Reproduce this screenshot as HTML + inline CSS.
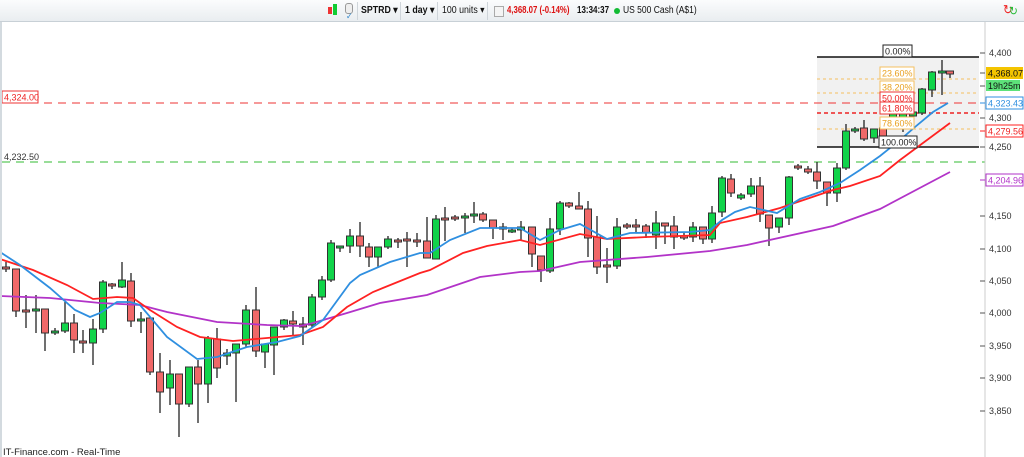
<!DOCTYPE html>
<html><head><meta charset="utf-8"><style>
body{margin:0;width:1024px;height:457px;overflow:hidden;background:#fff;font-family:"Liberation Sans",sans-serif;}
#tb{position:absolute;left:0;top:0;width:1024px;height:21px;background:linear-gradient(#fbfcfd,#e9edf0);border-bottom:1px solid #c8d0d6;font-size:10px;color:#111;}
#tb span{position:absolute;top:5px;white-space:nowrap;transform-origin:0 50%;transform:scaleX(0.88)}
.sep{position:absolute;top:2px;width:1px;height:18px;background:#cfd5da}
svg{position:absolute;left:0;top:0}
</style></head><body>
<svg width="1024" height="457" id="s" font-family="Liberation Sans, sans-serif"></svg>
<div id="tb">
<div style="position:absolute;left:328px;top:7px;width:4px;height:7px;background:#e33"></div>
<div style="position:absolute;left:333px;top:4px;width:4px;height:11px;background:#1c3"></div>
<div style="position:absolute;left:345px;top:3px;width:6px;height:9px;border:1px solid #999;border-radius:3px;background:#eee"></div>
<span style="left:346px;top:11px;color:#38c;font-size:9px">✓</span>
<div class="sep" style="left:357px"></div>
<span style="left:361px;font-weight:bold">SPTRD ▾</span>
<div class="sep" style="left:400px"></div>
<span style="left:405px;font-weight:bold">1 day ▾</span>
<div class="sep" style="left:437px"></div>
<span style="left:442px">100 units ▾</span>
<div class="sep" style="left:487px"></div>
<div style="position:absolute;left:494px;top:6px;width:8px;height:9px;border:1px solid #aaa;background:#f4f4f4"></div>
<span style="left:507px;color:#d11;font-weight:bold;transform:scaleX(0.78)">4,368.07 (-0.14%)</span>
<span style="left:577px;font-weight:bold;transform:scaleX(0.8)">13:34:37</span>
<div style="position:absolute;left:614px;top:8px;width:6px;height:6px;border-radius:3px;background:#1b3"></div>
<span style="left:623px;transform:scaleX(0.85)">US 500 Cash (A$1)</span>
<span style="left:1003px;top:2px;font-size:13px;color:#e22">↻</span>
<span style="left:1009px;top:4px;font-size:12px;color:#2b3">↻</span>
</div>
<div style="position:absolute;left:0;top:22px;width:2px;height:435px;background:#d3dadf"></div>
<script>
var s=document.getElementById('s'),h='';
function L(x1,y1,x2,y2,c,w,d){h+='<line x1="'+x1+'" y1="'+y1+'" x2="'+x2+'" y2="'+y2+'" stroke="'+c+'" stroke-width="'+(w||1)+'"'+(d?' stroke-dasharray="'+d+'"':'')+'/>';}
function R(x,y,w,hh,f,st){h+='<rect x="'+x+'" y="'+y+'" width="'+w+'" height="'+hh+'" fill="'+f+'"'+(st?' stroke="'+st+'"':'')+'/>';}
function T(x,y,t,c,sz,a){h+='<text x="'+x+'" y="'+y+'" fill="'+c+'" font-size="'+(sz||9)+'"'+(a?' text-anchor="'+a+'"':'')+'>'+t+'</text>';}
R(817,57,162,90,'#f1f1f1');
L(817,57,979,57,'#111',1.5);L(817,147,979,147,'#111',1.5);
L(817,79,979,79,'#f5c060',1,'3,3');L(817,93,979,93,'#f5c060',1,'3,3');
L(817,113,979,113,'#e22',1.5,'4,3');L(817,129,979,129,'#f5c060',1,'3,3');
L(2,103,985,103,'#e33',1,'8,6');L(2,162,985,162,'#3b3',1,'8,6');
L(985,22,985,457,'#ccc');
var ax=[[4400,53],[4350,86],[4300,118],[4250,147],[4150,216],[4100,249],[4050,281],[4000,313],[3950,346],[3900,378],[3850,411]];
ax.forEach(function(a){L(980,a[1],985,a[1],'#555');T(989,a[1]+3,a[0].toLocaleString('en-US'),'#333',9);});
var C=[[6,267,269,262,272,0],[16,269,311,269,317,0],[26,310,312,295,328,0],[36,309,311,295,333,1],[45,309,333,309,351,0],[55,331,333,328,335,1],[65,323,331,302,333,1],[74,323,340,314,353,0],[83,341,343,330,353,0],[93,329,343,319,365,1],[103,282,329,280,333,1],[112,284,286,283,289,0],[122,280,287,262,288,1],[131,281,321,273,327,0],[141,319,321,312,333,1],[150,318,372,318,375,0],[160,372,392,353,413,0],[170,374,388,360,405,1],[179,374,404,374,437,0],[189,367,404,367,407,1],[198,367,384,360,423,0],[208,338,384,336,403,1],[217,339,368,328,378,0],[227,353,356,349,365,1],[236,344,353,344,402,1],[246,310,344,305,348,1],[256,310,351,287,357,0],[265,344,352,344,368,1],[274,327,345,327,375,1],[284,320,327,319,330,1],[293,321,324,311,335,0],[303,324,327,317,345,0],[312,297,325,294,327,1],[322,280,297,276,300,1],[331,243,280,240,282,1],[340,246,248,246,252,1],[350,236,246,229,253,1],[360,236,246,222,257,0],[369,247,257,243,267,0],[378,247,257,247,268,1],[388,239,247,236,249,1],[398,240,242,238,248,0],[407,239,241,232,267,0],[417,240,242,233,247,0],[427,241,258,217,258,0],[436,219,259,215,259,1],[445,218,220,207,241,0],[455,217,219,215,221,0],[465,216,218,213,233,1],[474,214,216,202,223,1],[483,214,220,212,222,0],[493,220,228,220,239,0],[503,227,229,223,240,0],[512,230,232,228,233,1],[521,227,230,221,241,1],[532,227,254,227,267,0],[541,256,270,256,282,0],[550,229,271,218,273,1],[560,203,229,201,235,1],[569,203,206,202,208,0],[579,206,209,192,209,0],[588,209,238,201,257,0],[597,237,267,216,274,0],[607,265,267,248,283,0],[617,227,266,218,269,1],[627,225,227,223,229,0],[636,225,227,219,233,0],[646,226,233,224,238,0],[656,223,235,211,249,1],[665,223,226,223,244,0],[674,226,237,216,249,0],[684,236,238,233,240,0],[693,227,237,222,242,1],[703,227,239,227,244,0],[712,213,239,206,243,1],[722,178,212,176,217,1],[731,179,193,174,197,0],[741,195,198,193,200,1],[751,186,194,178,197,1],[760,186,214,177,222,0],[769,215,228,215,246,0],[779,218,227,218,233,1],[789,177,218,176,225,1],[798,166,168,164,170,0],[808,169,172,166,174,0],[817,172,181,162,189,0],[827,182,193,182,206,0],[837,168,193,163,202,1],[846,131,168,124,170,1],[855,129,131,127,133,1],[864,128,139,120,141,0],[874,129,138,129,143,1],[883,128,137,122,140,0],[893,114,117,110,120,1],[903,113,117,112,132,1],[913,112,116,108,120,1],[922,89,113,88,115,1],[932,72,90,71,97,1],[942,71,73,60,95,1],[950,71,74,71,78,0]];
C.forEach(function(c){L(c[0],c[3],c[0],c[4],'#222',1.3);R(c[0]-3.5,c[1],7,Math.max(c[2]-c[1],1.5),c[5]?'#11d44a':'#f06868','#333');});
function P(pts,c){h+='<polyline fill="none" stroke="'+c+'" stroke-width="1.8" points="'+pts+'"/>';}
P('0,296 50,298 100,303 140,305 167,312 217,322 267,325 300,326 313,323 347,313 380,303 427,295 480,277 520,272 540,271 580,262 647,257 710,251 747,245 833,226 880,209 950,172','#b233c8');
P('0,259 33,270 67,285 93,299 117,297 133,298 150,310 177,327 200,337 233,341 267,338 300,335 323,327 347,307 373,292 420,273 430,270 463,253 487,246 520,240 540,245 580,234 607,239 647,237 710,235 720,223 747,217 780,208 833,190 850,186 880,176 900,160 950,123','#f22');
P('0,252 20,265 50,288 75,310 90,317 100,313 117,302 130,302 140,305 167,337 197,359 217,357 247,347 277,342 300,336 323,320 350,283 360,275 390,262 420,253 430,253 450,240 480,228 520,228 540,240 560,230 580,224 607,239 630,233 690,232 710,230 722,220 735,212 750,207 777,213 790,205 800,199 820,192 840,183 860,170 880,156 900,140 915,127 933,112 948,103','#2f8fe0');
function B(x,y,w,t,bc,tc){R(x,y,w,12,'#fff',bc);T(x+2,y+9.5,t,tc,9);}
B(883,45,29,'0.00%','#222','#222');B(880,67,34,'23.60%','#f5c060','#e8a020');B(880,81,34,'38.20%','#f5c060','#e8a020');
B(880,92,34,'50.00%','#e33','#e22');B(880,102,34,'61.80%','#e33','#e22');B(880,117,34,'78.60%','#f5c060','#e8a020');B(879,136,38,'100.00%','#222','#222');
R(2,91,36,12,'#fff','#e33');T(4,100.5,'4,324.00','#e22',9);T(4,160,'4,232.50','#333',9);
R(986,67,37,12,'#f4c400');T(988,76.5,'4,368.07','#111',9);
R(986,80,34,11,'#5de27a');T(988,89,'19h25m','#111',9);
L(980,73,985,73,'#555');
R(986,97,37,12,'#fff','#2f8fe0');T(988,106.5,'4,323.43','#2f8fe0',9);L(980,103,985,103,'#2f8fe0');
R(986,125,37,12,'#fff','#f22');T(988,134.5,'4,279.56','#e22',9);L(980,131,985,131,'#f22');
R(986,174,37,12,'#fff','#b233c8');T(988,183.5,'4,204.96','#b233c8',9);L(980,180,985,180,'#b233c8');
T(3,455,'IT-Finance.com - Real-Time','#222',9.5);
s.innerHTML=h;
</script>
</body></html>
